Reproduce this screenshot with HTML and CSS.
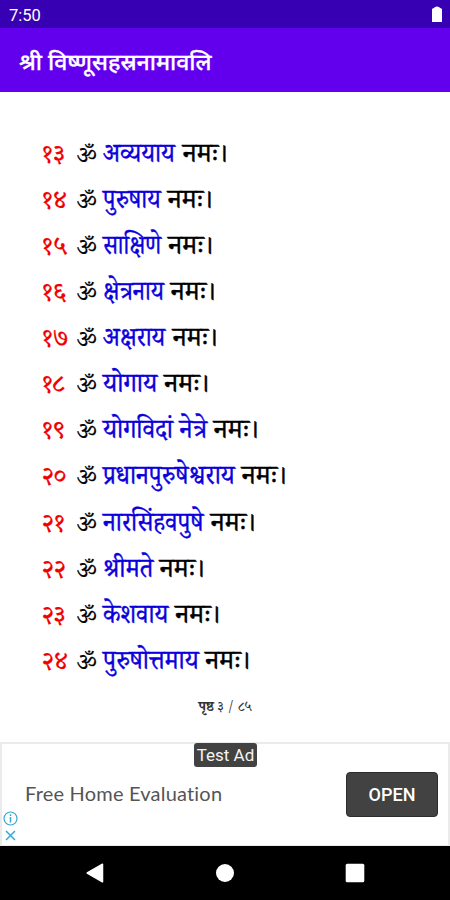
FILE: index.html
```
<!DOCTYPE html>
<html lang="sa">
<head>
<meta charset="utf-8">
<title>श्री विष्णूसहस्रनामावलि</title>
<link rel="stylesheet" href="styles.css">
</head>
<body>
<div class="status"><span>7:50</span><svg width="10" height="16" viewBox="0 0 10 16"><path d="M0 16V3.500Q0 2 2 2Q2.500 .5 5 .5T8 2Q10 2 10 3.500V16Z" fill="#fff"/></svg></div>
<header class="appbar"><h1>श्री विष्णूसहस्रनामावलि</h1></header>
<main class="page">
<ol class="names">
<li><span class="num">१३</span><span class="om">ॐ</span><span class="name" style="--w:73px;--s:.914">अव्ययाय</span><span class="namah">नमः।</span></li>
<li><span class="num">१४</span><span class="om">ॐ</span><span class="name" style="--w:58px;--s:.892">पुरुषाय</span><span class="namah">नमः।</span></li>
<li><span class="num">१५</span><span class="om">ॐ</span><span class="name" style="--w:58.5px;--s:.85">साक्षिणे</span><span class="namah">नमः।</span></li>
<li><span class="num">१६</span><span class="om">ॐ</span><span class="name" style="--w:61px;--s:.87">क्षेत्रनाय</span><span class="namah">नमः।</span></li>
<li><span class="num">१७</span><span class="om">ॐ</span><span class="name" style="--w:63px;--s:.9">अक्षराय</span><span class="namah">नमः।</span></li>
<li><span class="num">१८</span><span class="om">ॐ</span><span class="name" style="--w:54.5px;--s:.94">योगाय</span><span class="namah">नमः।</span></li>
<li><span class="num">१९</span><span class="om">ॐ</span><span class="name" style="--w:104px;--s:.93">योगविदां नेत्रे</span><span class="namah">नमः।</span></li>
<li><span class="num">२०</span><span class="om">ॐ</span><span class="name" style="--w:132px;--s:.92">प्रधानपुरुषेश्वराय</span><span class="namah">नमः।</span></li>
<li><span class="num">२१</span><span class="om">ॐ</span><span class="name" style="--w:101px;--s:.918">नारसिंहवपुषे</span><span class="namah">नमः।</span></li>
<li><span class="num">२२</span><span class="om">ॐ</span><span class="name" style="--w:50px;--s:.94">श्रीमते</span><span class="namah">नमः।</span></li>
<li><span class="num">२३</span><span class="om">ॐ</span><span class="name" style="--w:65.5px;--s:.91">केशवाय</span><span class="namah">नमः।</span></li>
<li><span class="num">२४</span><span class="om">ॐ</span><span class="name" style="--w:95.5px;--s:.927">पुरुषोत्तमाय</span><span class="namah">नमः।</span></li>
</ol>
<p class="pager"><b>पृष्ठ</b> ३ / ८५</p>
</main>
<section class="ad">
<span class="tag">Test Ad</span>
<span class="headline">Free Home Evaluation</span>
<button class="open">OPEN</button>
<div class="choices">
<svg width="15" height="15" viewBox="0 0 15 15" fill="none" stroke="#36a9d3"><circle cx="7.500" cy="7.500" r="6.500" stroke-width="1.200"/><path d="M7.500 6v5.500M7.500 3.300v1.600" stroke-width="1.500"/></svg>
<svg width="15" height="15" viewBox="0 0 15 15" fill="none" stroke="#36a9d3"><path d="M3 3l9 9M12 3l-9 9" stroke-width="1.500"/></svg>
</div>
</section>
<nav class="navbar">
<svg width="20" height="22" viewBox="0 0 20 22"><path d="M17.500 2.200L2.200 11L17.500 19.800Z" fill="#fff" stroke="#fff" stroke-width="1.500" stroke-linejoin="round"/></svg>
<svg width="20" height="20" viewBox="0 0 20 20"><circle cx="10" cy="10" r="9" fill="#fff"/></svg>
<svg width="20" height="20" viewBox="0 0 20 20"><rect x=".7" y=".7" width="18.600" height="18.600" rx="1.500" fill="#fff"/></svg>
</nav>
</body>
</html>
```
FILE: styles.css
```
* { box-sizing: border-box; }
body {
  margin: 0;
  height: 900px;
  display: flex;
  flex-direction: column;
  background: #fff;
  font-family: Roboto, sans-serif;
  overflow: hidden;
}
.status {
  height: 28px;
  flex: none;
  display: flex;
  justify-content: space-between;
  align-items: center;
  padding: 2px 8px 0 9px;
  background: #3700b3;
  color: #fff;
  font-size: 16.500px;
}
.status svg { margin-top: -2px; }
.appbar {
  height: 64px;
  flex: none;
  display: flex;
  align-items: center;
  padding: 8px 0 0 19px;
  background: #6200ee;
  color: #fff;
}
.appbar h1 {
  margin: 0;
  font: 500 23px/30px "Noto Sans Devanagari", "Noto Sans", sans-serif;
  white-space: nowrap;
  -webkit-text-stroke: .3px currentColor;
}
.page {
  height: 650px;
  flex: none;
  padding-top: 42.500px;
}
.names {
  margin: 0;
  padding: 0 0 0 42px;
  list-style: none;
  font: 27px/46.150px "Noto Serif Devanagari", "Lohit Devanagari", serif;
}
.names li {
  display: flex;
  align-items: baseline;
  height: 46.150px;
  white-space: nowrap;
  -webkit-text-stroke: .4px currentColor;
}
.num { width: 34px; color: #f00000; font-size: 26px; -webkit-text-stroke-width: .2px; }
.om { width: 27px; color: #000; font-size: 23px; -webkit-text-stroke-width: .2px; }
.name {
  width: var(--w);
  margin-right: 6.700px;
  color: #0b00dc;
  transform: scaleX(var(--s));
  transform-origin: left;
}
.namah { color: #000; }
.pager {
  margin: 11px 0 0;
  text-align: center;
  font: 14px/20px "Noto Serif Devanagari", "Lohit Devanagari", serif;
  color: #333;
}
.ad {
  position: relative;
  height: 104px;
  flex: none;
  display: flex;
  align-items: center;
  justify-content: space-between;
  padding: 0 10px 0 23px;
  border: 2px solid #ebebeb;
  border-bottom-width: 1px;
}
.tag {
  position: absolute;
  left: 192px;
  top: -1px;
  width: 63px;
  height: 24px;
  border-radius: 3px;
  background: #424242;
  color: #f4f4f4;
  font-size: 17px;
  line-height: 25px;
  text-align: center;
}
.headline {
  padding-bottom: 3px;
  font: 20px/24px Lato, sans-serif;
  font-variant-ligatures: none;
  letter-spacing: .2px;
  color: #555;
}
.open {
  width: 92px;
  height: 45px;
  border: 1px solid #2c2c2c;
  border-radius: 4px;
  background: #424242;
  color: #fff;
  font: 500 18px/24px Roboto, sans-serif;
}
.choices {
  position: absolute;
  left: 1px;
  bottom: 2px;
  display: flex;
  flex-direction: column;
  gap: 2px;
}
.navbar {
  flex: 1;
  display: grid;
  grid-template-columns: 130px 130px 130px;
  justify-content: center;
  justify-items: center;
  align-items: center;
  background: #000;
}
```
